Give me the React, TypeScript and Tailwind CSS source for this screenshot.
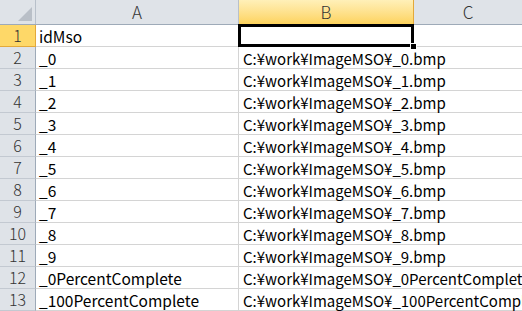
import React from "react";

const rows: [string, string][] = [
  ["idMso", ""],
  ["_0", "C:¥work¥ImageMSO¥_0.bmp"],
  ["_1", "C:¥work¥ImageMSO¥_1.bmp"],
  ["_2", "C:¥work¥ImageMSO¥_2.bmp"],
  ["_3", "C:¥work¥ImageMSO¥_3.bmp"],
  ["_4", "C:¥work¥ImageMSO¥_4.bmp"],
  ["_5", "C:¥work¥ImageMSO¥_5.bmp"],
  ["_6", "C:¥work¥ImageMSO¥_6.bmp"],
  ["_7", "C:¥work¥ImageMSO¥_7.bmp"],
  ["_8", "C:¥work¥ImageMSO¥_8.bmp"],
  ["_9", "C:¥work¥ImageMSO¥_9.bmp"],
  ["_0PercentComplete", "C:¥work¥ImageMSO¥_0PercentComplete.bmp"],
  ["_100PercentComplete", "C:¥work¥ImageMSO¥_100PercentComplete.bmp"],
];

const font = "[font-family:'Noto_Sans_CJK_JP','Liberation_Sans',sans-serif]";

export default function App() {
  return (
    <div className={`w-[522px] h-[311px] overflow-hidden bg-white text-[15px] ${font}`}>
      {/* column headers */}
      <div className="flex h-[25px] border-b border-[#9eaab8]">
        <div className="relative w-[36px] shrink-0 border-r border-[#b8c0ca] bg-[#dfe3e8]">
          <svg className="absolute right-[3px] bottom-[3px]" width="14" height="14" viewBox="0 0 14 14">
            <polygon points="14,0 14,14 0,14" fill="#b9bfc7" />
          </svg>
        </div>
        <div className="w-[203px] shrink-0 border-r border-[#b8c0ca] bg-[#dfe3e8] flex items-center justify-center text-[#333] font-light text-[17px]">
          A
        </div>
        <div className="w-[175px] shrink-0 border-r border-[#e3a93a] bg-gradient-to-b from-[#fff0b8] to-[#fdd35c] flex items-center justify-center text-[#333] font-light text-[17px]">
          B
        </div>
        <div className="flex-1 bg-[#dfe3e8] flex items-center justify-center text-[#333] font-light text-[17px]">
          C
        </div>
      </div>

      {rows.map(([a, b], i) => (
        <div key={i} className="flex h-[22px]">
          <div
            className={`w-[36px] shrink-0 border-r border-b flex items-end justify-center text-[#333] font-light text-[16px] leading-none ${
              i === 0
                ? "bg-[#fed868] border-r-[#e3a93a] border-b-[#e3a93a]"
                : "bg-[#dfe3e8] border-r-[#9eaab8] border-b-[#c3c9d1]"
            }`}
          >
            <span className="pb-[3px]">{i + 1}</span>
          </div>
          <div className="w-[203px] shrink-0 border-r border-b border-[#d4d4d4] flex items-end pl-[3px] pb-[2px] leading-none whitespace-nowrap overflow-hidden text-[15.5px]">
            {a}
          </div>
          <div
            className={`relative w-[175px] shrink-0 border-b border-[#d4d4d4] flex items-end pl-[4px] pb-[2px] leading-none whitespace-nowrap ${
              i === 0 ? "border-r" : "pr-[1px]"
            }`}
          >
            <span className="relative z-0">{b}</span>
            {i === 0 && (
              <>
                <div className="absolute -left-[1px] -top-[1px] -right-[1px] -bottom-[1px] border-[3px] border-black z-10" />
                <div className="absolute -right-[4px] -bottom-[4px] w-[7px] h-[7px] bg-black border border-white z-20" />
              </>
            )}
          </div>
          <div className="flex-1 border-b border-[#d4d4d4]" />
        </div>
      ))}
    </div>
  );
}
